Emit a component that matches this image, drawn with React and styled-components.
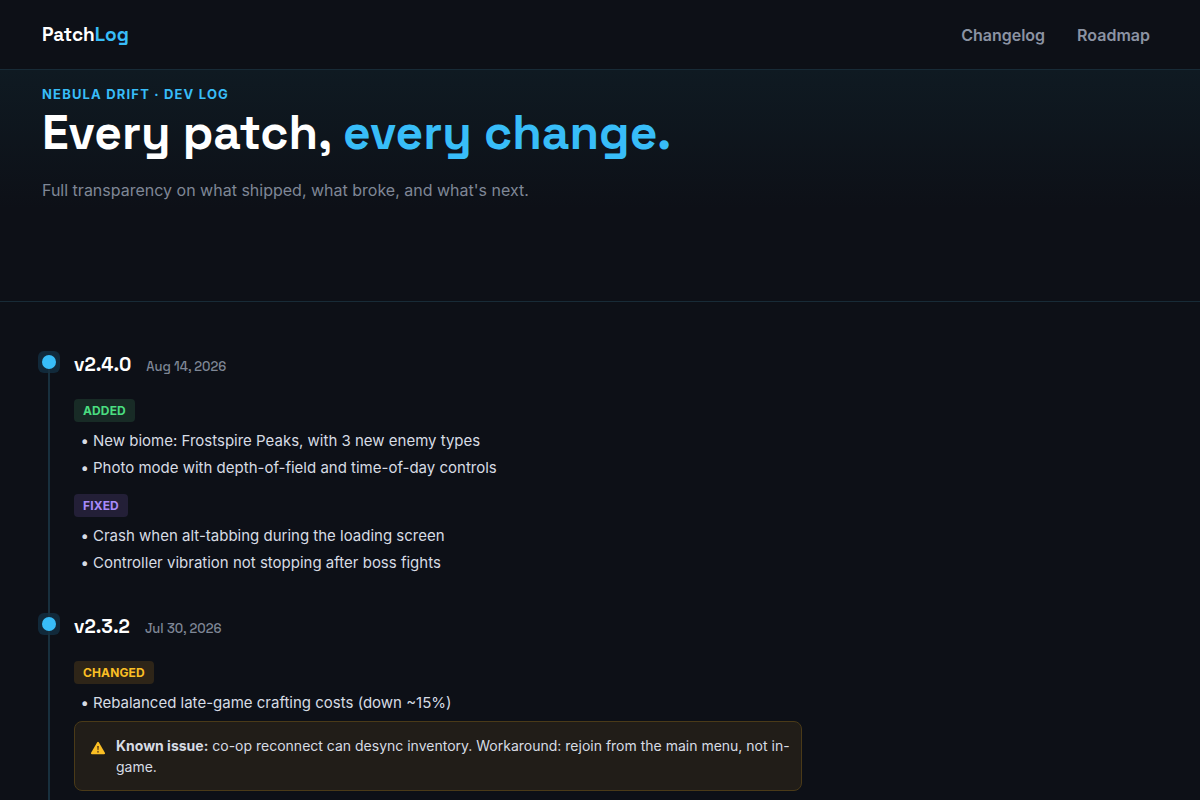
import React from 'react';
import styled, { createGlobalStyle } from 'styled-components';

const releases = [
  {
    version: 'v2.4.0',
    date: 'Aug 14, 2026',
    groups: [
      {
        type: 'Added',
        items: [
          'New biome: Frostspire Peaks, with 3 new enemy types',
          'Photo mode with depth-of-field and time-of-day controls',
        ],
      },
      {
        type: 'Fixed',
        items: [
          'Crash when alt-tabbing during the loading screen',
          'Controller vibration not stopping after boss fights',
        ],
      },
    ],
  },
  {
    version: 'v2.3.2',
    date: 'Jul 30, 2026',
    groups: [{ type: 'Changed', items: ['Rebalanced late-game crafting costs (down ~15%)'] }],
    issue:
      'co-op reconnect can desync inventory. Workaround: rejoin from the main menu, not in-game.',
  },
];

const tagColors = {
  Added: { text: '#4ade80', back: '#182b26' },
  Fixed: { text: '#a78bfa', back: '#231f37' },
  Changed: { text: '#fbbf24', back: '#2e2518' },
};

const WarningIcon = () => (
  <svg width='16' height='16' viewBox='0 0 16 16' aria-hidden='true'>
    <path
      d='M7.200 2.300a.95.95 0 0 1 1.600 0l6.100 10.500c.4.700 0 1.400-.8 1.400H1.900c-.8 0-1.200-.7-.8-1.400z'
      fill='#fbbf24'
    />
    <path d='M7.200 6h1.600l-.3 4.200h-1z' fill='#5a3a12' />
    <circle cx='8' cy='11.800' r='.85' fill='#5a3a12' />
  </svg>
);

const App = () => {
  return (
    <Page>
      <GlobalStyle />
      <Header>
        <Logo href='#top'>
          Patch<Accent>Log</Accent>
        </Logo>
        <Nav>
          <NavItem href='#changelog'>Changelog</NavItem>
          <NavItem href='#roadmap'>Roadmap</NavItem>
        </Nav>
      </Header>
      <Hero>
        <Eyebrow>Nebula Drift · Dev Log</Eyebrow>
        <Heading>
          Every patch, <Accent>every change.</Accent>
        </Heading>
        <Lead>Full transparency on what shipped, what broke, and what's next.</Lead>
      </Hero>
      <Main>
        <Rail>
          {releases.map((release) => (
            <Release key={release.version}>
              <Dot />
              <ReleaseHead>
                <Version>{release.version}</Version>
                <ReleaseDate>{release.date}</ReleaseDate>
              </ReleaseHead>
              {release.groups.map((group) => (
                <Group key={group.type}>
                  <Tag $type={group.type}>{group.type}</Tag>
                  <List>
                    {group.items.map((item) => (
                      <li key={item}>{item}</li>
                    ))}
                  </List>
                </Group>
              ))}
              {release.issue && (
                <Notice>
                  <WarningIcon />
                  <p>
                    <strong>Known issue:</strong> {release.issue}
                  </p>
                </Notice>
              )}
            </Release>
          ))}
        </Rail>
      </Main>
    </Page>
  );
};

const GlobalStyle = createGlobalStyle`
  * {
    box-sizing: border-box;
    margin: 0;
    padding: 0;
  }

  body {
    background: #0d1017;
    color: #d7dce4;
    font-family: Inter, sans-serif;
  }
`;

const displayFont = "'Space Grotesk', Inter, sans-serif";

const Page = styled.div`
  display: flex;
  flex-direction: column;
  min-height: 100vh;
`;

const Header = styled.header`
  display: flex;
  align-items: center;
  justify-content: space-between;
  height: 70px;
  padding: 0 50px 0 42px;
  border-bottom: 1px solid #182b37;
`;

const Logo = styled.a`
  color: #fff;
  font-family: ${displayFont};
  font-size: 19px;
  font-weight: 700;
  text-decoration: none;
`;

const Accent = styled.span`
  color: #38bdf8;
`;

const Nav = styled.nav`
  display: flex;
  gap: 32px;
`;

const NavItem = styled.a`
  color: #8b93a3;
  font-size: 16px;
  font-weight: 600;
  text-decoration: none;
`;

const Hero = styled.section`
  min-height: 232px;
  padding: 16px 42px;
  border-bottom: 1px solid #182b37;
  background: linear-gradient(180deg, #0f1a22, #0d1017 60%);
`;

const Eyebrow = styled.p`
  color: #38bdf8;
  font-size: 13px;
  font-weight: 700;
  line-height: 16px;
  letter-spacing: 0.09em;
  text-transform: uppercase;
`;

const Heading = styled.h1`
  margin-top: 5px;
  color: #fff;
  font-family: ${displayFont};
  font-size: 48px;
  font-weight: 700;
  line-height: 52px;
`;

const Lead = styled.p`
  margin-top: 19px;
  color: #7f8796;
  font-size: 16px;
  line-height: 24px;
`;

const Main = styled.main`
  display: flex;
  flex: 1;
  padding: 48px 42px 0;
`;

const Rail = styled.div`
  position: relative;
  display: flex;
  flex: 1;
  flex-direction: column;
  gap: 36px;
  max-width: 760px;
  padding-left: 32px;

  &::before {
    content: '';
    position: absolute;
    top: 12px;
    bottom: 0;
    left: 6px;
    width: 2px;
    background: #18303e;
  }
`;

const Release = styled.article`
  position: relative;
`;

const Dot = styled.span`
  position: absolute;
  top: 5px;
  left: -32px;
  width: 14px;
  height: 14px;
  border-radius: 50%;
  background: #38bdf8;

  &::before {
    content: '';
    position: absolute;
    inset: -4px;
    z-index: -1;
    border-radius: 6px;
    background: #11293a;
  }
`;

const ReleaseHead = styled.header`
  display: flex;
  align-items: baseline;
  gap: 15px;
  height: 28px;
  margin-bottom: 21px;
  font-family: ${displayFont};
`;

const Version = styled.h2`
  color: #fff;
  font-size: 19px;
  font-weight: 700;
  line-height: 30px;
`;

const ReleaseDate = styled.time`
  color: #7f8796;
  font-size: 13px;
  font-weight: 500;
`;

const Group = styled.div`
  & + & {
    margin-top: 13px;
  }
`;

const Tag = styled.h3`
  width: fit-content;
  padding: 1px 9px 0;
  border-radius: 4px;
  background: ${({ $type }) => tagColors[$type].back};
  color: ${({ $type }) => tagColors[$type].text};
  font-size: 12px;
  font-weight: 700;
  line-height: 22px;
  letter-spacing: 0.01em;
  text-transform: uppercase;
`;

const List = styled.ul`
  margin-top: 5px;
  padding-left: 19px;
  font-size: 15px;
  line-height: 27px;
  list-style-type: '• ';
`;

const Notice = styled.aside`
  display: flex;
  gap: 10px;
  margin-top: 5px;
  padding: 13px 8px 13px 15px;
  border: 1px solid #4a3a18;
  border-radius: 8px;
  background: #211d18;
  font-size: 14px;
  line-height: 21px;

  svg {
    flex: none;
    margin-top: 5px;
  }
`;

export default App;
